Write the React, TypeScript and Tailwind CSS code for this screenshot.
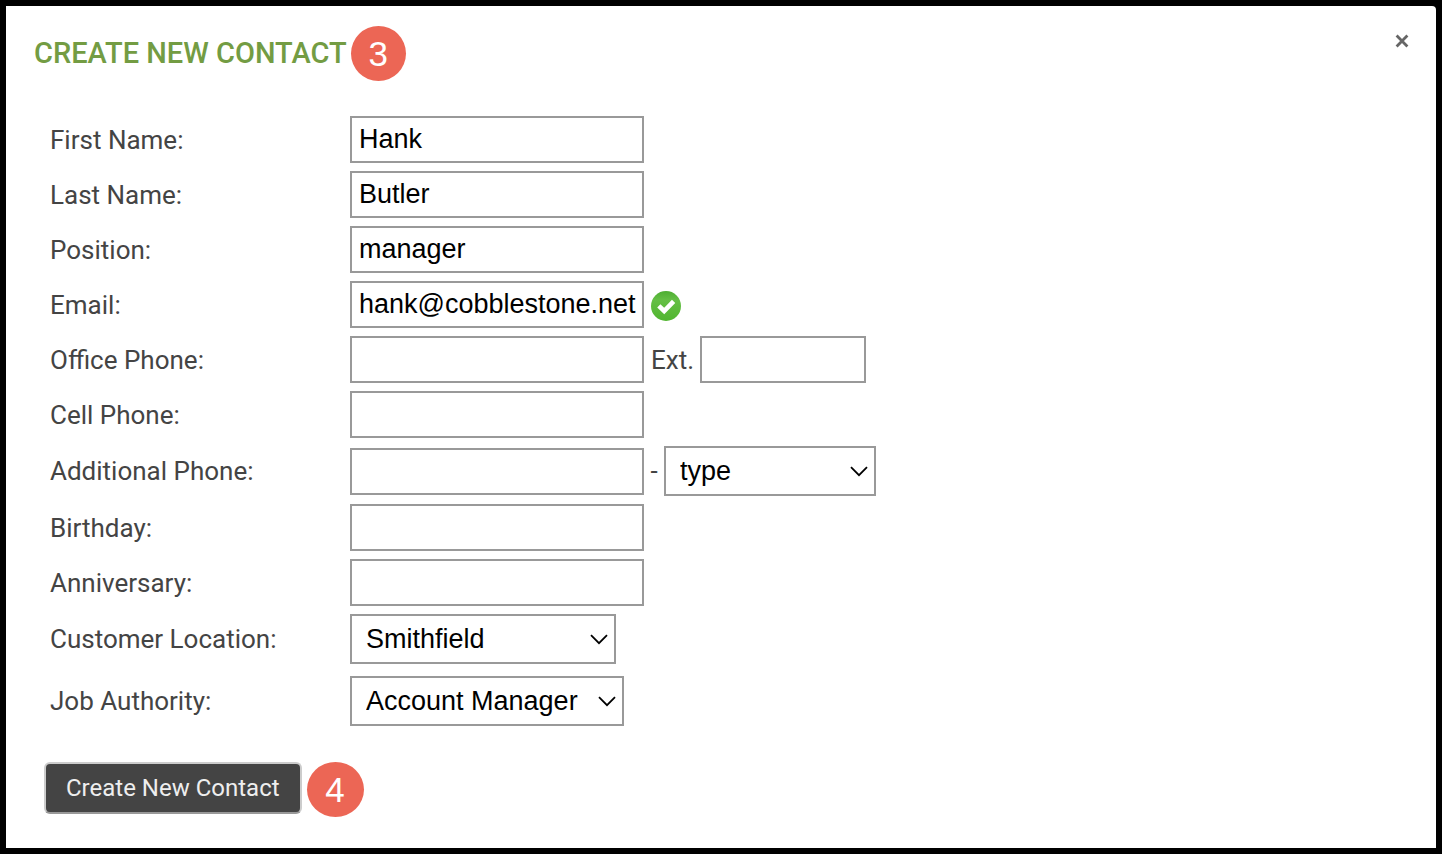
import type { InputHTMLAttributes, ReactNode } from "react";

const StepBadge = ({ step, className }: { step: number; className: string }) => (
  <span className={`flex h-[55px] shrink-0 items-center justify-center rounded-[50%] bg-[#ec6655] pt-0.5 font-['Liberation_Sans',Arial,sans-serif] text-[35px] text-white ${className}`}>
    {step}
  </span>
);

const TextInput = ({ className = "w-[294px]", ...props }: InputHTMLAttributes<HTMLInputElement>) => (
  <input
    type="text"
    className={`h-[47px] border-2 border-[#999] bg-white pr-1 pl-[7px] font-['Liberation_Sans',Arial,sans-serif] text-[27px] text-black outline-none ${className}`}
    {...props}
  />
);

interface SelectInputProps {
  id: string;
  options: string[];
  label?: string;
  className: string;
}

const SelectInput = ({ id, options, label, className }: SelectInputProps) => (
  <div className={`relative h-[50px] ${className}`}>
    <select
      id={id}
      aria-label={label}
      defaultValue={options[0]}
      className="h-full w-full appearance-none border-2 border-[#999] bg-white pl-3.5 font-['Liberation_Sans',Arial,sans-serif] text-[27px] text-black outline-none"
    >
      {options.map((option) => (
        <option key={option}>{option}</option>
      ))}
    </select>
    <svg viewBox="0 0 18 11" className="pointer-events-none absolute top-5 right-2 h-[11px] w-[18px]" fill="none" stroke="#000" strokeWidth="1.8" aria-hidden="true">
      <path d="M1 1.2 9 9.2 17 1.2" />
    </svg>
  </div>
);

const Row = ({ id, label, children }: { id: string; label: string; children: ReactNode }) => (
  <div className="flex items-center">
    <label htmlFor={id} className="w-[300px] shrink-0 leading-8">
      {label}:
    </label>
    {children}
  </div>
);

const ValidIcon = () => (
  <svg viewBox="0 0 30 30" className="mt-0.5 ml-[7px] size-[30px]" role="img" aria-label="Valid email">
    <defs>
      <linearGradient id="valid-fill" x1="0" y1="0" x2="0" y2="1">
        <stop offset="0" stopColor="#4dae32" />
        <stop offset="0.3" stopColor="#65bf45" />
        <stop offset="1" stopColor="#50b52f" />
      </linearGradient>
    </defs>
    <circle cx="15" cy="15" r="15" fill="url(#valid-fill)" />
    <path d="M7.8 14.8 13.2 20 22.6 10.4" fill="none" stroke="#fff" strokeWidth="4.6" />
  </svg>
);

export default function App() {
  return (
    <div className="flex min-h-screen bg-black p-1.5 font-['Roboto',sans-serif] text-[26px] text-[#444]">
      <main className="flex-1 rounded-tr-sm bg-white pt-5 pr-[27px] pb-[31px] pl-7">
        <header className="flex items-start justify-between">
          <div className="flex items-center gap-1">
            <h1 className="text-[29px] font-medium text-[#739c43] uppercase">Create New Contact</h1>
            <StepBadge step={3} className="w-[55px]" />
          </div>
          <button type="button" aria-label="Close" className="mt-2 text-[#666]">
            <svg viewBox="0 0 14 14" className="size-3.5" fill="none" stroke="currentColor" strokeWidth="2.8" aria-hidden="true">
              <path d="M1.6 1.6 12.4 12.4M12.4 1.6 1.6 12.4" />
            </svg>
          </button>
        </header>

        <form className="mt-[35px]" onSubmit={(e) => e.preventDefault()}>
          <div className="flex flex-col gap-2 pl-4">
            <Row id="first-name" label="First Name">
              <TextInput id="first-name" defaultValue="Hank" />
            </Row>
            <Row id="last-name" label="Last Name">
              <TextInput id="last-name" defaultValue="Butler" />
            </Row>
            <Row id="position" label="Position">
              <TextInput id="position" defaultValue="manager" />
            </Row>
            <Row id="email" label="Email">
              <TextInput id="email" defaultValue="hank@cobblestone.net" />
              <ValidIcon />
            </Row>
            <Row id="office-phone" label="Office Phone">
              <TextInput id="office-phone" />
              <label htmlFor="ext" className="mr-1.5 ml-[7px] leading-8">
                Ext.
              </label>
              <TextInput id="ext" className="w-[166px]" />
            </Row>
            <Row id="cell-phone" label="Cell Phone">
              <TextInput id="cell-phone" />
            </Row>
            <Row id="additional-phone" label="Additional Phone">
              <TextInput id="additional-phone" />
              <span className="w-5 text-center">-</span>
              <SelectInput id="phone-type" label="Phone type" options={["type", "Home", "Work"]} className="w-[212px]" />
            </Row>
            <Row id="birthday" label="Birthday">
              <TextInput id="birthday" />
            </Row>
            <Row id="anniversary" label="Anniversary">
              <TextInput id="anniversary" />
            </Row>
            <Row id="location" label="Customer Location">
              <SelectInput id="location" options={["Smithfield"]} className="w-[266px]" />
            </Row>
            <div className="mt-1">
              <Row id="authority" label="Job Authority">
                <SelectInput id="authority" options={["Account Manager"]} className="w-[274px]" />
              </Row>
            </div>
          </div>

          <div className="mt-9 flex items-start gap-[5px] pl-2.5">
            <button type="submit" className="h-[52px] rounded-md border-2 border-[#ccc] border-b-[#999] bg-[#444] px-5 text-2xl text-[#eee]">
              Create New Contact
            </button>
            <StepBadge step={4} className="w-[57px]" />
          </div>
        </form>
      </main>
    </div>
  );
}
